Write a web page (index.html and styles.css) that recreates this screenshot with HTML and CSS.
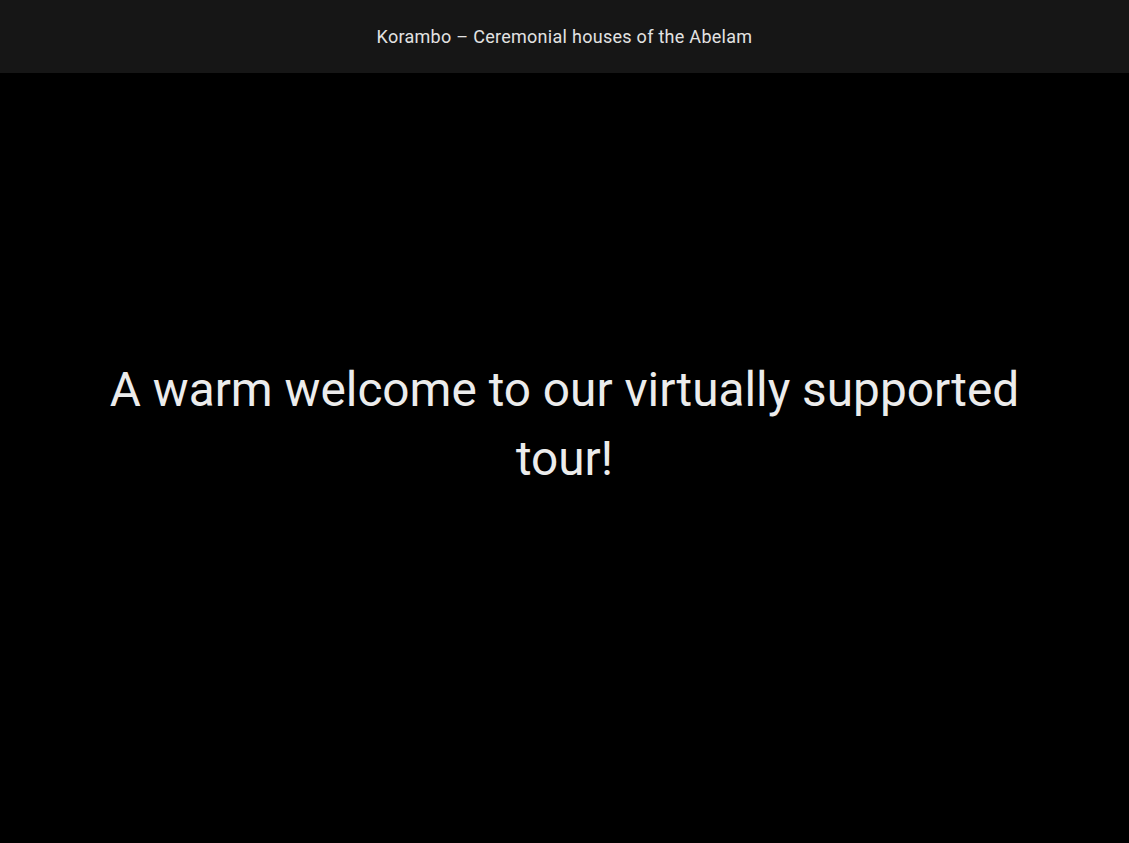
FILE: index.html
```html
<!DOCTYPE html>
<html lang="en">
<head>
<meta charset="utf-8">
<title>Korambo</title>
<link rel="stylesheet" href="styles.css">
</head>
<body>
<header class="topbar">
  <h1 class="topbar-title">Korambo – Ceremonial houses of the Abelam</h1>
</header>
<main class="stage">
  <p class="welcome">A warm welcome to our virtually supported tour!</p>
</main>
</body>
</html>
```

FILE: styles.css
```css
html, body {
  margin: 0;
  padding: 0;
  height: 100%;
  background: #000;
}
body {
  display: flex;
  flex-direction: column;
  font-family: Roboto, "Noto Sans", sans-serif;
  color: #ececec;
}
.topbar {
  height: 73px;
  flex: 0 0 73px;
  background: #161616;
  display: flex;
  align-items: center;
  justify-content: center;
}
.topbar-title {
  margin: 0;
  font-size: 18px;
  font-weight: 400;
  color: #e2e2e2;
  letter-spacing: 0.28px;
}
.stage {
  flex: 1;
  display: flex;
  align-items: center;
  justify-content: center;
  padding: 0 90px 66px;
}
.welcome {
  margin: 0;
  max-width: 960px;
  text-align: center;
  font-size: 47.75px;
  line-height: 69px;
  font-weight: 400;
  color: #ececec;
}
```
